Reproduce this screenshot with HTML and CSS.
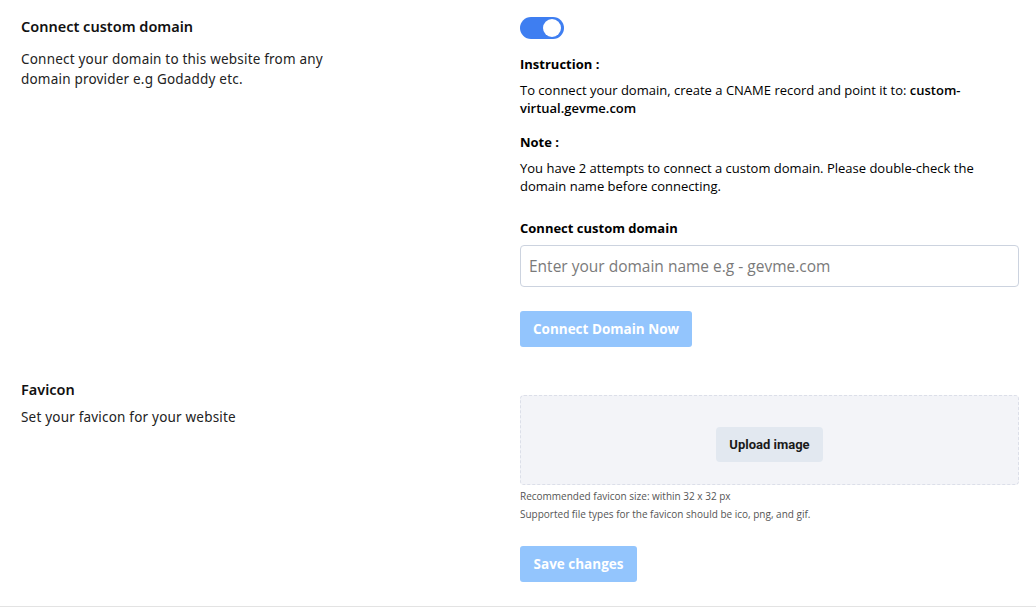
FILE: index.html
```html
<!DOCTYPE html>
<html>
<head>
<meta charset="utf-8">
<link rel="stylesheet" href="styles.css">
</head>
<body>
<div class="page">
  <section class="row row-domain">
    <div class="left">
      <h2 class="title">Connect custom domain</h2>
      <p class="desc">Connect your domain to this website from any domain provider e.g Godaddy etc.</p>
    </div>
    <div class="right">
      <div class="toggle"><span class="knob"></span></div>
      <h4 class="label label-instr">Instruction :</h4>
      <p class="text">To connect your domain, create a CNAME record and point it to: <b>custom-virtual.gevme.com</b></p>
      <h4 class="label label-note">Note :</h4>
      <p class="text">You have 2 attempts to connect a custom domain. Please double-check the domain name before connecting.</p>
      <h4 class="label label-field">Connect custom domain</h4>
      <input class="input" type="text" placeholder="Enter your domain name e.g - gevme.com">
      <button class="btn btn-connect">Connect Domain Now</button>
    </div>
  </section>
  <section class="row row-favicon">
    <div class="left">
      <h2 class="title">Favicon</h2>
      <p class="desc">Set your favicon for your website</p>
    </div>
    <div class="right">
      <div class="dropzone"><button class="upload">Upload image</button></div>
      <p class="hint">Recommended favicon size: within 32 x 32 px</p>
      <p class="hint">Supported file types for the favicon should be ico, png, and gif.</p>
      <button class="btn btn-save">Save changes</button>
    </div>
  </section>
</div>
</body>
</html>
```
FILE: styles.css
```css
* { box-sizing: border-box; }
html, body { margin: 0; padding: 0; background: #fff; }
body { font-family: "Open Sans", "Noto Sans", sans-serif; color: #000; }
.page {
  width: 1036px;
  height: 607px;
  border-bottom: 1px solid #e3e3e3;
  padding: 0 18px 0 21px;
}
.row { display: flex; }
.left { width: 499px; flex: none; }
.right { flex: 1; display: flex; flex-direction: column; align-items: flex-start; }
.title {
  margin: 0;
  font-family: "Noto Sans", sans-serif;
  font-weight: 600;
  font-size: 14.5px;
  line-height: 20px;
  color: #111;
}
.desc {
  margin: 13px 0 0;
  font-family: "Noto Sans", sans-serif;
  font-size: 13.5px;
  line-height: 20px;
  color: #222;
  width: 320px;
  letter-spacing: 0.2px;
}
.row-favicon .desc { margin-top: 8px; }
.row-domain .left { padding-top: 16px; }
.row-domain .right { padding-top: 17px; }
.toggle {
  width: 44px;
  height: 22px;
  border-radius: 11px;
  background: #3e7ef1;
  position: relative;
}
.knob {
  position: absolute;
  right: 3px;
  top: 2px;
  width: 18px;
  height: 18px;
  border-radius: 50%;
  background: #fff;
}
.label {
  margin: 0;
  font-size: 13px;
  font-weight: 700;
  line-height: 18px;
  color: #000;
}
.label-instr { margin-top: 16px; }
.label-note { margin-top: 16px; }
.label-field { margin-top: 24px; }
.text {
  margin: 8px 0 0;
  font-size: 13px;
  line-height: 18px;
  color: #000;
  width: 470px;
}
.text b { font-weight: 600; }
.input {
  margin-top: 8px;
  width: 499px;
  height: 42px;
  border: 1px solid #ccd3df;
  border-radius: 4px;
  padding: 0 8px;
  font-family: "Open Sans", sans-serif;
  font-size: 15.5px;
  color: #333;
  outline: none;
}
.input::placeholder { color: #7a7a7a; }
.btn {
  border: none;
  border-radius: 3px;
  background: #93c5fd;
  color: #fff;
  font-family: "Open Sans", sans-serif;
  font-weight: 700;
  font-size: 13.5px;
  height: 36px;
  padding: 0;
  white-space: nowrap;
}
.btn-connect { margin-top: 24px; width: 172px; }
.row-favicon { margin-top: 32px; }
.dropzone {
  margin-top: 16px;
  width: 499px;
  height: 90px;
  background: #f3f4f8;
  border: 1px dashed #dcdfe9;
  border-radius: 4px;
  display: flex;
  align-items: center;
  justify-content: center;
  padding-top: 9px;
}
.upload {
  border: none;
  border-radius: 4px;
  background: #e2e8f0;
  color: #1a1a1a;
  font-family: Roboto, sans-serif;
  font-weight: 700;
  font-size: 13px;
  width: 107px;
  height: 35px;
}
.hint {
  margin: 0;
  font-family: "Open Sans", sans-serif;
  font-size: 10px;
  line-height: 18px;
  color: #555;
}
.dropzone + .hint { margin-top: 2px; }
.btn-save { margin-top: 23px; width: 117px; }
```
